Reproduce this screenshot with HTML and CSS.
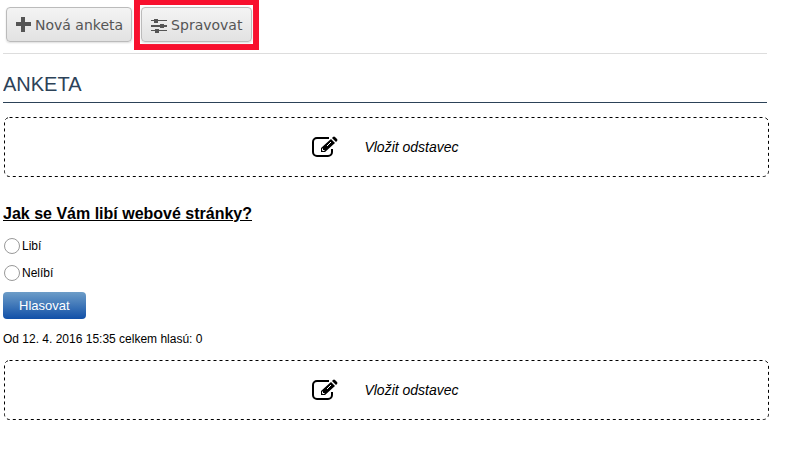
FILE: index.html
```html
<!DOCTYPE html>
<html lang="cs">
<head>
  <meta charset="utf-8">
  <title>Anketa</title>
  <link rel="stylesheet" href="styles.css">
</head>
<body>
  <div class="toolbar">
    <button type="button" class="tool">
      <svg width="16" height="16" viewBox="0 0 16 16"><path d="M6 0h4v5h6v4h-6v6H6V9H1V5h5z"/></svg>
      Nová anketa
    </button>
    <div class="highlight">
      <button type="button" class="tool">
        <svg width="16" height="16" viewBox="0 0 16 16"><path d="M0 3h16v1H0zM0 8h16v2H0zM0 13h16v1H0zM3 2h4v4H3zM9 7h4v4H9zM4 12h4v4H4z"/></svg>
        Spravovat
      </button>
    </div>
  </div>

  <h1>ANKETA</h1>

  <button type="button" class="insert">
    <svg class="outline"><rect x="0.5" y="0.5" rx="5"/></svg>
    <svg width="26" height="26" viewBox="0 0 26 26"><path class="sheet" d="M17 4H5a4 4 0 0 0-4 4v10a4 4 0 0 0 4 4h11a4 4 0 0 0 4-4v-3"/><path d="M9 18v-4l10-9 4 4-10 9zM20 4l1-1q1-1 2 0l2 2q1 1 0 2l-1 1z"/><path class="cut" d="M10.500 14.500v2h2M15 12l4-4"/></svg>
    Vložit odstavec
  </button>

  <form class="poll">
    <h2>Jak se Vám libí webové stránky?</h2>
    <div class="option">
      <input type="radio" name="answer" id="answer-yes">
      <label for="answer-yes">Libí</label>
    </div>
    <div class="option">
      <input type="radio" name="answer" id="answer-no">
      <label for="answer-no">Nelíbí</label>
    </div>
    <button type="button" class="vote">Hlasovat</button>
    <p>Od 12. 4. 2016 15:35 celkem hlasú: 0</p>
  </form>

  <button type="button" class="insert">
    <svg class="outline"><rect x="0.5" y="0.5" rx="5"/></svg>
    <svg width="26" height="26" viewBox="0 0 26 26"><path class="sheet" d="M17 4H5a4 4 0 0 0-4 4v10a4 4 0 0 0 4 4h11a4 4 0 0 0 4-4v-3"/><path d="M9 18v-4l10-9 4 4-10 9zM20 4l1-1q1-1 2 0l2 2q1 1 0 2l-1 1z"/><path class="cut" d="M10.500 14.500v2h2M15 12l4-4"/></svg>
    Vložit odstavec
  </button>
</body>
</html>
```
FILE: styles.css
```css
body {
  margin: 0 15px 0 3px;
  background: #fff;
  color: #000;
  font-family: "Liberation Sans", Arial, sans-serif;
  font-size: 12px;
}
button {
  cursor: pointer;
}
.toolbar {
  display: flex;
  align-items: flex-start;
  height: 53px;
  margin-right: 3px;
  border-bottom: 1px solid #ddd;
}
.tool {
  display: flex;
  align-items: center;
  gap: 4px;
  height: 35px;
  padding: 0 8px;
  border: 1px solid #bbb;
  border-radius: 4px;
  background: linear-gradient(#f4f4f4, #e2e2e2);
  box-shadow: 0 1px 2px #ddd;
  color: #555;
  font-family: "DejaVu Sans", sans-serif;
  font-size: 14px;
}
.tool svg {
  fill: #555;
}
.toolbar > .tool {
  margin: 7px 2px 0 3px;
}
.highlight {
  padding: 2px 1px;
  border: 6px solid #f8102e;
  border-top-width: 5px;
}
.highlight .tool {
  padding: 0 9px;
}
h1 {
  margin: 18px 3px 14px 0;
  padding-bottom: 6px;
  border-bottom: 1px solid #2c4258;
  color: #2c4258;
  font-size: 20px;
  font-weight: normal;
  line-height: 24px;
}
.insert {
  position: relative;
  display: flex;
  align-items: center;
  justify-content: center;
  gap: 26px;
  width: calc(100% - 2px);
  height: 60px;
  margin-left: 1px;
  padding: 0 2px 0 0;
  border: 0;
  background: none;
  color: #000;
  font-family: inherit;
  font-size: 14px;
  font-style: italic;
}
.outline {
  position: absolute;
  top: 0;
  left: 0;
  width: 100%;
  height: 100%;
}
.outline rect {
  width: calc(100% - 1px);
  height: calc(100% - 1px);
  fill: none;
  stroke: #000;
  stroke-dasharray: 3 3;
}
.sheet {
  fill: none;
  stroke: #000;
  stroke-width: 2;
}
.cut {
  fill: none;
  stroke: #fff;
}
h2 {
  margin: 27px 0 8px;
  font-size: 16px;
  line-height: 20px;
  text-decoration: underline;
}
.option {
  display: flex;
  align-items: center;
  height: 27px;
}
.option input {
  appearance: none;
  width: 16px;
  height: 16px;
  margin: 0 2px 0 1px;
  border: 1px solid #999;
  border-radius: 50%;
  background: #fff;
}
.vote {
  display: block;
  height: 27px;
  margin-top: 6px;
  padding: 0 16px;
  border: 0;
  border-radius: 4px;
  background: linear-gradient(#6d9dc8, #1150a8);
  color: #fff;
  font-family: inherit;
  font-size: 13px;
}
.poll p {
  margin: 12px 0 13px;
  line-height: 16px;
}
```
